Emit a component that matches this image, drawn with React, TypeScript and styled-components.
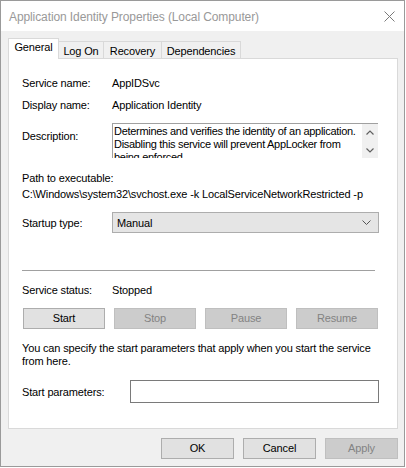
import styled, { createGlobalStyle } from 'styled-components';

const GlobalStyle = createGlobalStyle`
  html, body {
    margin: 0;
    padding: 0;
    background: #ffffff;
  }
  * {
    box-sizing: border-box;
  }
`;

const Window = styled.div`
  width: 405px;
  height: 467px;
  border: 1px solid #9a9a9a;
  display: flex;
  flex-direction: column;
  font-family: 'Liberation Sans', Arial, sans-serif;
  font-size: 11px;
  letter-spacing: -0.15px;
  color: #000;
`;

const TitleBar = styled.div`
  height: 30px;
  background: #ffffff;
  display: flex;
  align-items: center;
  justify-content: space-between;
  padding: 0 9px 0 8px;
`;

const Title = styled.span`
  font-size: 12px;
  letter-spacing: -0.1px;
  color: #999999;
  padding-top: 1px;
`;

const CloseIcon = styled.svg`
  width: 11px;
  height: 11px;
`;

const Body = styled.div`
  flex: 1;
  background: #f0f0f0;
  padding: 8px 6px 0 7px;
  display: flex;
  flex-direction: column;
`;

const TabStrip = styled.div`
  display: flex;
  align-items: flex-end;
  height: 20px;
  position: relative;
  z-index: 1;
  margin-bottom: -1px;
`;

const Tab = styled.div<{ $active?: boolean; $width: number }>`
  width: ${(p) => p.$width}px;
  height: ${(p) => (p.$active ? 21 : 18)}px;
  background: ${(p) => (p.$active ? '#ffffff' : '#f0f0f0')};
  border: 1px solid #d9d9d9;
  border-bottom: ${(p) => (p.$active ? 'none' : '1px solid #d9d9d9')};
  margin-left: ${(p) => (p.$active ? 0 : -1)}px;
  display: flex;
  align-items: ${(p) => (p.$active ? 'flex-start' : 'center')};
  justify-content: center;
  padding-top: ${(p) => (p.$active ? 2 : 1)}px;
  font-size: 11px;
`;

const Panel = styled.div`
  width: 390px;
  height: 371px;
  background: #ffffff;
  border: 1px solid #d9d9d9;
  padding: 0 18px 0 13px;
  display: flex;
  flex-direction: column;
`;

const Row = styled.div<{ $gap: number }>`
  display: flex;
  align-items: center;
  margin-top: ${(p) => p.$gap}px;
  line-height: 14px;
`;

const Label = styled.div<{ $width?: number; $offset?: number }>`
  width: ${(p) => p.$width ?? 90}px;
  flex-shrink: 0;
  align-self: ${(p) => (p.$offset ? 'flex-start' : 'center')};
  padding-top: ${(p) => p.$offset ?? 0}px;
`;

const DescBox = styled.div`
  width: 266px;
  height: 35px;
  border-top: 1px solid #a0a0a0;
  border-left: 1px solid #a0a0a0;
  display: flex;
  overflow: hidden;
`;

const DescText = styled.div`
  flex: 1;
  padding: 1px 0 0 1px;
  line-height: 13px;
  letter-spacing: -0.3px;
  white-space: nowrap;
  overflow: hidden;
`;

const ScrollTrack = styled.div`
  width: 16px;
  flex-shrink: 0;
  background: #f0f0f0;
  display: flex;
  flex-direction: column;
  align-items: center;
  justify-content: space-between;
  padding: 6px 0 5px;
`;

const Arrow = styled.svg`
  width: 8px;
  height: 5px;
`;

const PathBlock = styled.div`
  margin-top: 12px;
  line-height: 16px;
`;

const Select = styled.div`
  width: 267px;
  height: 21px;
  background: #e5e5e5;
  border: 1px solid #adadad;
  display: flex;
  align-items: center;
  justify-content: space-between;
  padding: 0 7px 0 4px;
`;

const Chevron = styled.svg`
  width: 9px;
  height: 5px;
`;

const Separator = styled.div`
  margin-top: 37px;
  width: 353px;
  height: 1px;
  background: #a0a0a0;
`;

const ButtonRow = styled.div`
  margin-top: 11px;
  margin-left: 1px;
  width: 355px;
  display: grid;
  grid-template-columns: repeat(4, 1fr);
  column-gap: 9px;
`;

const Button = styled.button<{ $disabled?: boolean }>`
  height: 21px;
  margin: 0;
  padding: 0;
  font-family: inherit;
  font-size: 11px;
  letter-spacing: -0.15px;
  background: ${(p) => (p.$disabled ? '#cccccc' : '#e1e1e1')};
  border: 1px solid ${(p) => (p.$disabled ? '#bfbfbf' : '#adadad')};
  color: ${(p) => (p.$disabled ? '#838383' : '#000000')};
  border-radius: 0;
  line-height: 19px;
`;

const Para = styled.p`
  margin: 13px 0 0;
  line-height: 13px;
  width: 365px;
`;

const Input = styled.div`
  width: 250px;
  height: 23px;
  border: 1px solid #7a7a7a;
  background: #ffffff;
  margin-left: 18px;
`;

const Footer = styled.div`
  display: flex;
  justify-content: flex-end;
  gap: 9px;
  margin-top: 9px;
`;

const FooterButton = styled(Button)`
  width: 73px;
`;

const tabs = [
  { label: 'General', width: 51, active: true },
  { label: 'Log On', width: 46 },
  { label: 'Recovery', width: 59 },
  { label: 'Dependencies', width: 80 },
];

export default function App() {
  return (
    <>
      <GlobalStyle />
      <Window>
        <TitleBar>
          <Title>Application Identity Properties (Local Computer)</Title>
          <CloseIcon viewBox="0 0 11 11">
            <path d="M0.5 0.5 L10.5 10.5 M10.5 0.5 L0.5 10.5" stroke="#7a7a7a" strokeWidth="1" fill="none" />
          </CloseIcon>
        </TitleBar>
        <Body>
          <TabStrip>
            {tabs.map((t) => (
              <Tab key={t.label} $active={t.active} $width={t.width}>
                {t.label}
              </Tab>
            ))}
          </TabStrip>
          <Panel>
            <Row $gap={17}>
              <Label>Service name:</Label>
              <span>AppIDSvc</span>
            </Row>
            <Row $gap={8}>
              <Label>Display name:</Label>
              <span>Application Identity</span>
            </Row>
            <Row $gap={11}>
              <Label $offset={6}>Description:</Label>
              <DescBox>
                <DescText>
                  Determines and verifies the identity of an application.
                  <br />
                  Disabling this service will prevent AppLocker from
                  <br />
                  being enforced.
                </DescText>
                <ScrollTrack>
                  <Arrow viewBox="0 0 8 5">
                    <path d="M0.5 4.5 L4 1 L7.5 4.5" stroke="#606060" strokeWidth="1.2" fill="none" />
                  </Arrow>
                  <Arrow viewBox="0 0 8 5">
                    <path d="M0.5 0.5 L4 4 L7.5 0.5" stroke="#606060" strokeWidth="1.2" fill="none" />
                  </Arrow>
                </ScrollTrack>
              </DescBox>
            </Row>
            <PathBlock>
              <div>Path to executable:</div>
              <div>C:\Windows\system32\svchost.exe -k LocalServiceNetworkRestricted -p</div>
            </PathBlock>
            <Row $gap={10}>
              <Label>Startup type:</Label>
              <Select>
                <span>Manual</span>
                <Chevron viewBox="0 0 9 5">
                  <path d="M0.5 0.5 L4.5 4.5 L8.5 0.5" stroke="#555555" strokeWidth="1" fill="none" />
                </Chevron>
              </Select>
            </Row>
            <Separator />
            <Row $gap={12}>
              <Label>Service status:</Label>
              <span>Stopped</span>
            </Row>
            <ButtonRow>
              <Button>Start</Button>
              <Button $disabled>Stop</Button>
              <Button $disabled>Pause</Button>
              <Button $disabled>Resume</Button>
            </ButtonRow>
            <Para>
              You can specify the start parameters that apply when you start the service from here.
            </Para>
            <Row $gap={12}>
              <Label>Start parameters:</Label>
              <Input />
            </Row>
          </Panel>
          <Footer>
            <FooterButton>OK</FooterButton>
            <FooterButton>Cancel</FooterButton>
            <FooterButton $disabled>Apply</FooterButton>
          </Footer>
        </Body>
      </Window>
    </>
  );
}
